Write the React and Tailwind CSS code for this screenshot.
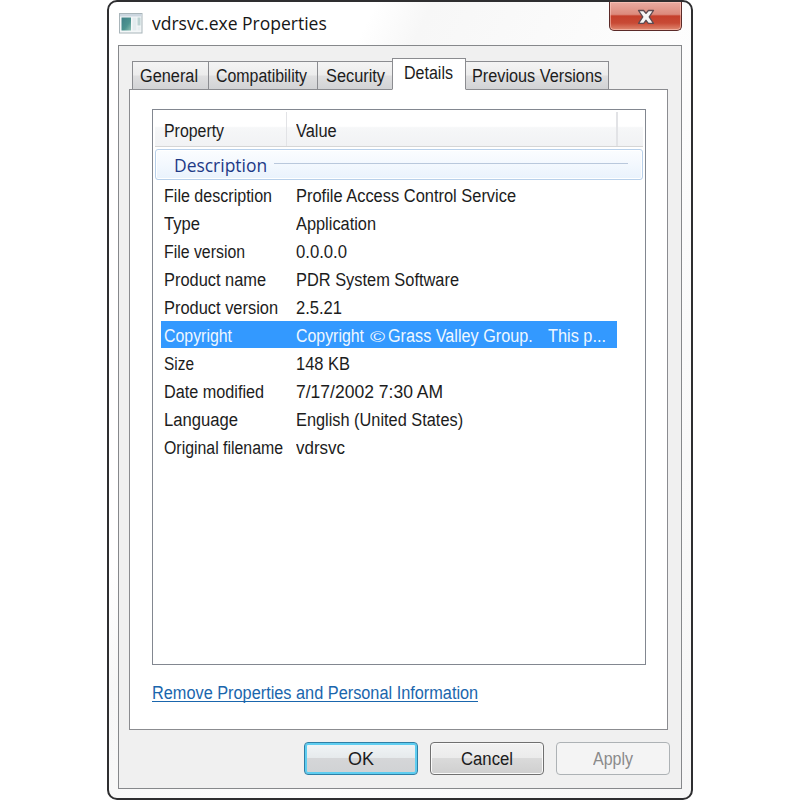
import React, { useLayoutEffect, useRef, useState } from 'react'
import { clsx } from 'clsx'

const rows = [
    { name: 'File description', value: 'Profile Access Control Service', nameWidth: 108, valueWidth: 220 },
    { name: 'Type', value: 'Application', nameWidth: 36, valueWidth: 80 },
    { name: 'File version', value: '0.0.0.0', nameWidth: 81, valueWidth: 51 },
    { name: 'Product name', value: 'PDR System Software', nameWidth: 102, valueWidth: 163 },
    { name: 'Product version', value: '2.5.21', nameWidth: 114, valueWidth: 46 },
    { name: 'Copyright', nameWidth: 68, selected: true },
    { name: 'Size', value: '148 KB', nameWidth: 30, valueWidth: 54 },
    { name: 'Date modified', value: '7/17/2002 7:30 AM', nameWidth: 100, valueWidth: 147 },
    { name: 'Language', value: 'English (United States)', nameWidth: 74, valueWidth: 167 },
    { name: 'Original filename', value: 'vdrsvc', nameWidth: 119, valueWidth: 49 },
]

const tabs = [
    { label: 'General', width: 58, box: 'w-[76px] pl-[7px]' },
    { label: 'Compatibility', width: 91, box: 'w-[109px] pl-[7px]' },
    { label: 'Security', width: 59, box: 'w-[75px] pl-[8px]' },
    { label: 'Details', width: 49, box: 'w-[74px] pl-[11px]' },
    { label: 'Previous Versions', width: 130, box: 'w-[143px] pl-[6px]' },
]

// squeezes a line of text horizontally so that it takes the given width
const Text = ({ width, className, children }) => {
    const ref = useRef(null)
    const [scale, setScale] = useState(1)

    useLayoutEffect(() => {
        setScale(width / ref.current.offsetWidth)
    }, [width, children])

    return (
        <span className='block shrink-0' style={{ width }}>
            <span
                ref={ref}
                className={clsx('inline-block origin-left whitespace-pre', className)}
                style={{ transform: `scaleX(${scale})` }}
            >
                {children}
            </span>
        </span>
    )
}

const AppIcon = () => (
    <svg width='24' height='21' viewBox='0 0 24 21'>
        <rect x='0.5' y='0.5' width='22.5' height='19.5' fill='#f4f7f8' stroke='#a9b5ba' />
        <rect x='1' y='1' width='21.5' height='2.5' fill='#cbd6df' />
        <rect x='2.5' y='4.5' width='9.5' height='13' fill='url(#pane)' />
        <rect x='13.5' y='4.5' width='4' height='13' fill='#e3ebee' />
        <rect x='18.5' y='4.5' width='3' height='8' fill='#bcd2d2' />
        <rect x='18.5' y='13.5' width='3' height='4' fill='#e8eef0' />
        <defs>
            <linearGradient id='pane' x1='0' y1='0' x2='1' y2='1'>
                <stop offset='0' stopColor='#3f7f86' />
                <stop offset='0.6' stopColor='#4d9490' />
                <stop offset='1' stopColor='#8fc1b4' />
            </linearGradient>
        </defs>
    </svg>
)

const CloseButton = () => (
    <button className='flex h-[29px] w-[73px] items-center justify-center rounded-b-[5px] border border-t-0 border-[#5b2a28] bg-[linear-gradient(180deg,#e9aba1_0%,#dc8a7c_44%,#c5402c_50%,#c84a35_75%,#e08a72_100%)] shadow-[inset_0_0_0_1px_rgba(255,205,195,0.55)]'>
        <svg width='18' height='16' viewBox='0 0 18 16' className='mt-px'>
            <path
                d='M1.5 1.5H6.6L9 4.4L11.4 1.5H16.5L12.2 7.9L16.5 14.3H11.3L9 11.3L6.7 14.3H1.5L5.8 7.9Z'
                fill='#f6f6f6'
                stroke='#5e4a50'
                strokeWidth='1.3'
                strokeLinejoin='round'
            />
        </svg>
    </button>
)

const TitleBar = () => (
    <div className='flex h-[43px] items-start justify-between pr-[9px] pl-[10px]'>
        <div className='flex h-[42px] items-center gap-[9px] font-["Open_Sans","Noto_Sans",sans-serif]'>
            <AppIcon />
            <Text width={175} className='text-[18px] leading-[24px] text-[#161616]'>vdrsvc.exe Properties</Text>
        </div>
        <CloseButton />
    </div>
)

const Tabs = () => (
    <div className='relative z-10 -mb-px flex h-[32px] items-end pl-[3px]'>
        {tabs.map((tab) => (
            <div
                key={tab.label}
                className={clsx(
                    'flex items-center border border-[#8b8c90]',
                    tab.box,
                    tab.label === 'Details'
                        ? 'h-[32px] border-b-white bg-white pb-[2px]'
                        : 'h-[29px] bg-[linear-gradient(180deg,#f4f4f4_0%,#ececec_48%,#dfdfe0_52%,#d2d3d5_100%)]',
                    tab.label === 'Previous Versions' && 'border-l-0',
                    tab.label !== 'Previous Versions' && tab.label !== 'Details' && 'border-r-0'
                )}
            >
                <Text width={tab.width}>{tab.label}</Text>
            </div>
        ))}
    </div>
)

const Row = ({ row }) => (
    <div className='flex h-7 items-start'>
        <div className={clsx('flex h-[27px] w-[456px] items-center pt-[2px] pl-[3px]', row.selected && 'bg-[#3399ff] text-[#eef7ff]')}>
            <div className='w-[132px]'>
                <Text width={row.nameWidth}>{row.name}</Text>
            </div>
            {row.selected ? (
                <div className='flex h-[22px]'>
                    <Text width={68}>Copyright</Text>
                    <Text width={15} className='ml-[6px] -mt-1 text-[15px]'>©</Text>
                    <span className='w-[9px]' />
                    <Text width={145}>Grass Valley Group.</Text>
                    <span className='w-[15px]' />
                    <Text width={58}>This p...</Text>
                </div>
            ) : (
                <Text width={row.valueWidth}>{row.value}</Text>
            )}
        </div>
    </div>
)

const PropertyList = () => (
    <div className='h-[556px] w-[494px] border border-[#828790] bg-white p-[2px]'>
        <div className='flex h-[35px] border-b border-[#d5d5d5] bg-[linear-gradient(180deg,#ffffff_0%,#ffffff_42%,#f6f7f8_46%,#f1f2f4_100%)]'>
            <div className='flex w-[132px] items-center border-r border-[#e2e3e6] pt-[3px] pl-[9px]'>
                <Text width={60}>Property</Text>
            </div>
            <div className='flex w-[331px] items-center border-r-2 border-[#e2e3e6] pt-[3px] pl-[9px]'>
                <Text width={41}>Value</Text>
            </div>
        </div>
        <div className='mt-[2px] flex h-[31px] w-[488px] items-center rounded-[3px] border border-[#b8d0ea] bg-[linear-gradient(180deg,#fbfdff_0%,#f3f8fe_50%,#e9f2fc_100%)] pr-[14px] pl-[18px] shadow-[inset_0_0_0_1px_#ffffff]'>
            <Text width={93} className='font-["Open_Sans","Noto_Sans",sans-serif] text-[18px] leading-[24px] text-[#1e3a87]'>Description</Text>
            <div className='mb-[2px] ml-[7px] h-px flex-1 bg-[#b9c8dc]' />
        </div>
        <div className='pt-px pl-[6px]'>
            {rows.map((row) => <Row key={row.name} row={row} />)}
        </div>
    </div>
)

const Button = ({ label, width, variant }) => (
    <button
        disabled={variant === 'disabled'}
        className={clsx(
            'flex h-[33px] w-[114px] items-center justify-center rounded-[4px] border',
            variant === 'default' && 'border-[#2f7fa5] bg-[linear-gradient(180deg,#f1f5f7_0%,#e6eaec_48%,#d5d6d8_50%,#d0d2d4_100%)] shadow-[inset_0_0_0_2px_#5ecdf0]',
            variant === 'normal' && 'border-[#707070] bg-[linear-gradient(180deg,#f2f2f2_0%,#ebebeb_48%,#dadada_50%,#cfcfcf_100%)] shadow-[inset_0_0_0_1px_#fafafa]',
            variant === 'disabled' && 'border-[#adb2b5] bg-[#f4f4f4] text-[#8a8a8a]'
        )}
    >
        <Text width={width}>{label}</Text>
    </button>
)

const App = () => {
    return (
        <div className='flex h-[800px] w-[800px] justify-center overflow-hidden bg-white'>
            <div className='h-[800px] w-[586px] rounded-[10px] border-2 border-[#2e2e30] bg-[linear-gradient(115deg,#ffffff_0%,#ffffff_28%,#f7f7f7_34%,#fdfdfd_60%,#f6f6f6_100%)] font-["Liberation_Sans",Arial,sans-serif] text-[18px] leading-[22px] text-[#1c1c1c]'>
                <TitleBar />
                <div className='ml-[9px] h-[744px] w-[564px] border border-[#86888b] bg-[#f0f0f0] pt-[12px] pl-[10px]'>
                    <Tabs />
                    <div className='h-[641px] w-[539px] border border-[#8b8c90] bg-white pt-[19px] pl-[22px]'>
                        <PropertyList />
                        <div className='mt-[17px] h-[20px] w-[326px] border-b border-[#1a66ad] text-[#1a66ad]'>
                            <Text width={326}>Remove Properties and Personal Information</Text>
                        </div>
                    </div>
                    <div className='mt-[12px] flex gap-3 pl-[175px]'>
                        <Button label='OK' width={26} variant='default' />
                        <Button label='Cancel' width={52} variant='normal' />
                        <Button label='Apply' width={40} variant='disabled' />
                    </div>
                </div>
            </div>
        </div>
    )
}

export default App
